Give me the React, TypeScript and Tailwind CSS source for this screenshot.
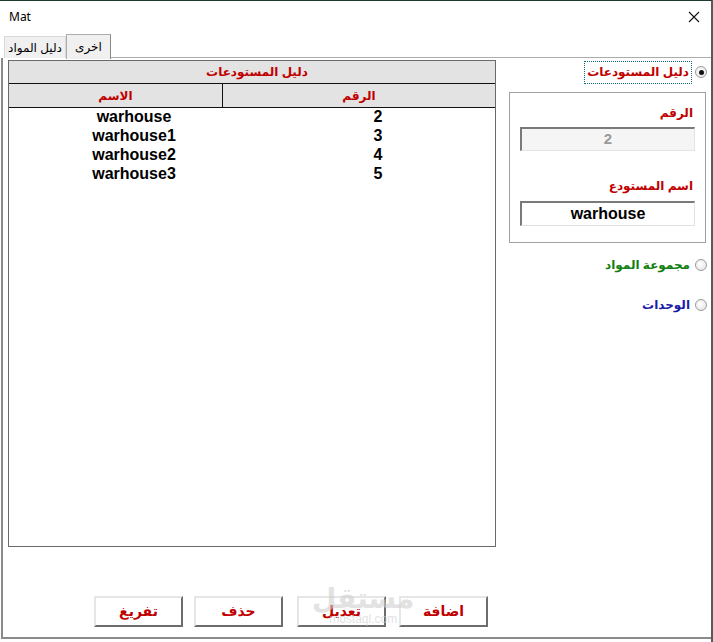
import React from 'react'

const AR = { fontFamily: '"Liberation Sans", "DejaVu Sans", "Noto Sans", sans-serif' }

const rows = [
  { name: 'warhouse', no: '2' },
  { name: 'warhouse1', no: '3' },
  { name: 'warhouse2', no: '4' },
  { name: 'warhouse3', no: '5' },
]

function Radio({ checked }: { checked?: boolean }) {
  return (
    <span className="flex h-[12px] w-[12px] items-center justify-center rounded-full border border-[#9a9a9a] bg-[radial-gradient(circle_at_40%_40%,#ffffff,#e2e2e2)]">
      {checked && <span className="h-[5px] w-[5px] rounded-full bg-[#111]" />}
    </span>
  )
}

function Btn({ label }: { label: string }) {
  return (
    <button
      className="h-[31px] w-[89px] border-2 border-t-[#e6e6e6] border-l-[#e6e6e6] border-b-[#6d6d6d] border-r-[#6d6d6d] bg-white text-[14px] font-bold text-[#c00000]"
      style={AR}
    >
      {label}
    </button>
  )
}

function App() {
  return (
    <div
      className="relative flex h-[642px] w-[713px] flex-col overflow-hidden border-t border-t-[#1f3b2c] border-r-2 border-r-[#5a5a5a] bg-white"
      style={AR}
    >
      <div className="flex h-[32px] shrink-0 items-center justify-between pl-[9px] pr-[9px]">
        <span className="text-[12px] text-black" style={{ fontFamily: '"Noto Sans", "Liberation Sans", sans-serif' }}>
          Mat
        </span>
        <svg width="12" height="12" viewBox="0 0 12 12" className="mr-[2px]">
          <path d="M1 1 L11 11 M11 1 L1 11" stroke="#111" strokeWidth="1.1" />
        </svg>
      </div>

      <div className="flex h-[25px] shrink-0 items-end pl-[4px]">
        <div className="flex h-[22px] w-[62px] items-center justify-center border border-b-0 border-[#d9d9d9] bg-[#f0f0f0] text-[12px] text-black">
          دليل المواد
        </div>
        <div className="relative top-[1px] flex h-[25px] w-[45px] items-center justify-center border border-b-0 border-[#adadad] border-r-[#8a8a8a] bg-[#f0f0f0] text-[12px] text-black">
          اخرى
        </div>
        <div className="h-[1px] flex-1 bg-[#adadad]" />
      </div>

      <div className="mb-[3px] ml-[1px] flex flex-1 flex-col border-b-2 border-l-2 border-b-[#8a8a8a] border-l-[#8a8a8a]">
        <div className="flex flex-1">
          <div className="ml-[5px] mt-[2px] flex w-[488px] flex-col">
            <div className="flex h-[487px] flex-col border border-[#6a6a6a] bg-white">
              <div className="flex h-[23px] items-center justify-center border-b border-[#111] bg-[#e3e3e3] pl-[10px] text-[12px] font-bold text-[#c00000]">
                دليل المستودعات
              </div>
              <div className="flex h-[24px] border-b border-[#111] bg-[#e3e3e3] text-[12px] font-bold text-[#c00000]">
                <div className="flex w-[214px] items-center justify-center border-r border-[#111]">الاسم</div>
                <div className="flex flex-1 items-center justify-center">الرقم</div>
              </div>
              <div className="-mt-[1px]">
                {rows.map((r) => (
                  <div key={r.no} className="flex h-[19px] items-center text-[16px] font-bold text-black">
                    <div className="w-[214px] pl-[36px] text-center">{r.name}</div>
                    <div className="flex-1 pl-[38px] text-center">{r.no}</div>
                  </div>
                ))}
              </div>
            </div>
            <div className="mt-[49px] flex pl-[86px]">
              <Btn label="تفريغ" />
              <div className="w-[11px]" />
              <Btn label="حذف" />
              <div className="w-[14px]" />
              <Btn label="تعديل" />
              <div className="w-[13px]" />
              <Btn label="اضافة" />
            </div>
          </div>

          <div className="ml-[13px] mt-[2px] flex w-[202px] flex-col">
            <div className="flex h-[24px] items-center justify-end gap-[3px] pr-[4px]">
              <span className="flex h-[23px] items-center border border-dotted border-[#0a6a7a] px-[2px] text-[12px] font-bold text-[#c00000]">
                دليل المستودعات
              </span>
              <Radio checked />
            </div>
            <div className="mt-[8px] flex h-[151px] w-[197px] flex-col border border-[#a0a0a0] px-[10px]">
              <div className="mt-[11px] pr-[2px] text-right text-[12px] font-bold text-[#c00000]">الرقم</div>
              <div className="mt-[5px] flex h-[24px] items-center justify-center border-b border-l-2 border-r border-t-2 border-b-[#e3e3e3] border-l-[#7a7a7a] border-r-[#e3e3e3] border-t-[#7a7a7a] bg-[#f5f5f5] text-[15px] font-bold text-[#9a9a9a]">
                2
              </div>
              <div className="mt-[26px] pr-[2px] text-right text-[12px] font-bold text-[#c00000]">اسم المستودع</div>
              <div className="mt-[6px] flex h-[25px] items-center justify-center border-b border-l-2 border-r border-t-2 border-b-[#e3e3e3] border-l-[#7a7a7a] border-r-[#e3e3e3] border-t-[#7a7a7a] bg-white text-[16px] font-bold text-black">
                warhouse
              </div>
            </div>
            <div className="mt-[13px] flex h-[18px] items-center justify-end gap-[5px] pr-[4px]">
              <span className="text-[12px] font-bold text-[#118011]">مجموعة المواد</span>
              <Radio />
            </div>
            <div className="mt-[22px] flex h-[18px] items-center justify-end gap-[5px] pr-[4px]">
              <span className="text-[12px] font-bold text-[#1a1aa8]">الوحدات</span>
              <Radio />
            </div>
          </div>
        </div>
      </div>

      <div className="pointer-events-none absolute left-[312px] top-[584px] flex flex-col items-center leading-none text-[#cfcfcf] opacity-60">
        <span className="text-[28px] font-bold">مستقل</span>
        <span className="text-[12px]" style={{ fontFamily: '"Liberation Sans", sans-serif' }}>mostaql.com</span>
      </div>
    </div>
  )
}

export default App
